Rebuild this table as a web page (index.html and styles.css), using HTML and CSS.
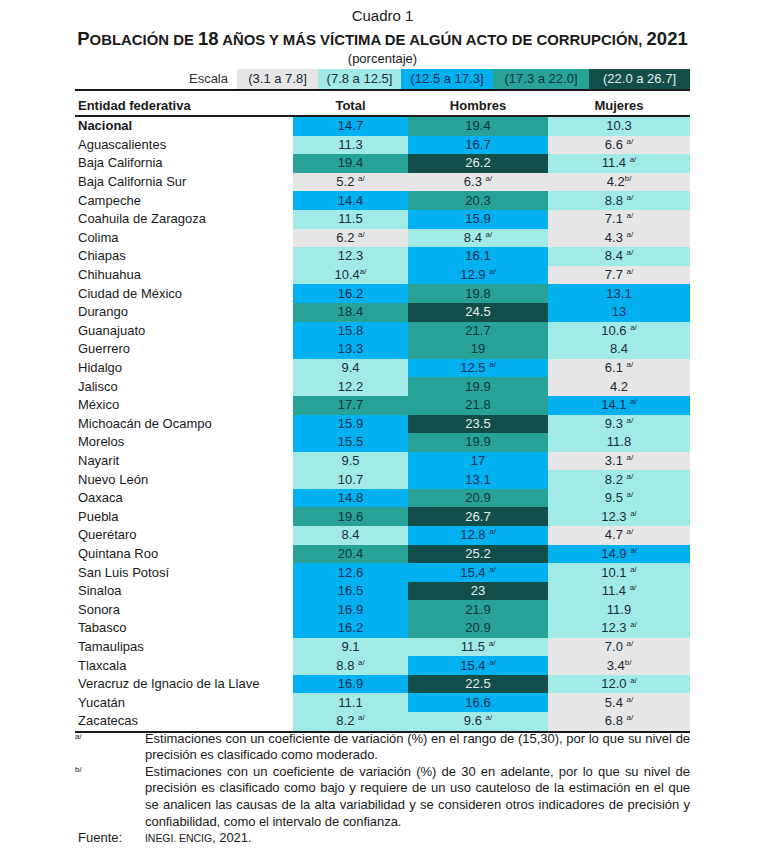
FILE: index.html
```html
<!DOCTYPE html>
<html lang="es">
<head>
<meta charset="utf-8">
<title>Cuadro 1</title>
<link rel="stylesheet" href="styles.css">
</head>
<body>
<div class="page">
  <div class="cuadro">Cuadro 1</div>
  <div class="title"><span class="big">P</span>OBLACIÓN DE <span class="big">18</span> AÑOS Y MÁS VÍCTIMA DE ALGÚN ACTO DE CORRUPCIÓN, <span class="big">2021</span></div>
  <div class="porc">(porcentaje)</div>
  <div class="scale">
    <div class="scale-label">Escala</div>
    <div class="seg s1 c1">(3.1 a 7.8]</div>
    <div class="seg s2 c2">(7.8 a 12.5]</div>
    <div class="seg s3 c3">(12.5 a 17.3]</div>
    <div class="seg s4 c4">(17.3 a 22.0]</div>
    <div class="seg s5 c5">(22.0 a 26.7]</div>
  </div>
  <table class="data">
    <colgroup><col class="w-name"><col class="w-tot"><col class="w-hom"><col class="w-muj"></colgroup>
    <thead>
      <tr><th class="name">Entidad federativa</th><th>Total</th><th>Hombres</th><th>Mujeres</th></tr>
    </thead>
    <tbody>
      <tr><td class="name b">Nacional</td><td class="c3">14.7</td><td class="c4">19.4</td><td class="c2">10.3</td></tr>
      <tr><td class="name">Aguascalientes</td><td class="c2">11.3</td><td class="c3">16.7</td><td class="c1">6.6 <sup>a/</sup></td></tr>
      <tr><td class="name">Baja California</td><td class="c4">19.4</td><td class="c5">26.2</td><td class="c2">11.4 <sup>a/</sup></td></tr>
      <tr><td class="name">Baja California Sur</td><td class="c1">5.2 <sup>a/</sup></td><td class="c1">6.3 <sup>a/</sup></td><td class="c1">4.2<sup>b/</sup></td></tr>
      <tr><td class="name">Campeche</td><td class="c3">14.4</td><td class="c4">20.3</td><td class="c2">8.8 <sup>a/</sup></td></tr>
      <tr><td class="name">Coahuila de Zaragoza</td><td class="c2">11.5</td><td class="c3">15.9</td><td class="c1">7.1 <sup>a/</sup></td></tr>
      <tr><td class="name">Colima</td><td class="c1">6.2 <sup>a/</sup></td><td class="c2">8.4 <sup>a/</sup></td><td class="c1">4.3 <sup>a/</sup></td></tr>
      <tr><td class="name">Chiapas</td><td class="c2">12.3</td><td class="c3">16.1</td><td class="c2">8.4 <sup>a/</sup></td></tr>
      <tr><td class="name">Chihuahua</td><td class="c2">10.4<sup>a/</sup></td><td class="c3">12.9 <sup>a/</sup></td><td class="c1">7.7 <sup>a/</sup></td></tr>
      <tr><td class="name">Ciudad de México</td><td class="c3">16.2</td><td class="c4">19.8</td><td class="c3">13.1</td></tr>
      <tr><td class="name">Durango</td><td class="c4">18.4</td><td class="c5">24.5</td><td class="c3">13</td></tr>
      <tr><td class="name">Guanajuato</td><td class="c3">15.8</td><td class="c4">21.7</td><td class="c2">10.6 <sup>a/</sup></td></tr>
      <tr><td class="name">Guerrero</td><td class="c3">13.3</td><td class="c4">19</td><td class="c2">8.4</td></tr>
      <tr><td class="name">Hidalgo</td><td class="c2">9.4</td><td class="c3">12.5 <sup>a/</sup></td><td class="c1">6.1 <sup>a/</sup></td></tr>
      <tr><td class="name">Jalisco</td><td class="c2">12.2</td><td class="c4">19.9</td><td class="c1">4.2</td></tr>
      <tr><td class="name">México</td><td class="c4">17.7</td><td class="c4">21.8</td><td class="c3">14.1 <sup>a/</sup></td></tr>
      <tr><td class="name">Michoacán de Ocampo</td><td class="c3">15.9</td><td class="c5">23.5</td><td class="c2">9.3 <sup>a/</sup></td></tr>
      <tr><td class="name">Morelos</td><td class="c3">15.5</td><td class="c4">19.9</td><td class="c2">11.8</td></tr>
      <tr><td class="name">Nayarit</td><td class="c2">9.5</td><td class="c3">17</td><td class="c1">3.1 <sup>a/</sup></td></tr>
      <tr><td class="name">Nuevo León</td><td class="c2">10.7</td><td class="c3">13.1</td><td class="c2">8.2 <sup>a/</sup></td></tr>
      <tr><td class="name">Oaxaca</td><td class="c3">14.8</td><td class="c4">20.9</td><td class="c2">9.5 <sup>a/</sup></td></tr>
      <tr><td class="name">Puebla</td><td class="c4">19.6</td><td class="c5">26.7</td><td class="c2">12.3 <sup>a/</sup></td></tr>
      <tr><td class="name">Querétaro</td><td class="c2">8.4</td><td class="c3">12.8 <sup>a/</sup></td><td class="c1">4.7 <sup>a/</sup></td></tr>
      <tr><td class="name">Quintana Roo</td><td class="c4">20.4</td><td class="c5">25.2</td><td class="c3">14.9 <sup>a/</sup></td></tr>
      <tr><td class="name">San Luis Potosí</td><td class="c3">12.6</td><td class="c3">15.4 <sup>a/</sup></td><td class="c2">10.1 <sup>a/</sup></td></tr>
      <tr><td class="name">Sinaloa</td><td class="c3">16.5</td><td class="c5">23</td><td class="c2">11.4 <sup>a/</sup></td></tr>
      <tr><td class="name">Sonora</td><td class="c3">16.9</td><td class="c4">21.9</td><td class="c2">11.9</td></tr>
      <tr><td class="name">Tabasco</td><td class="c3">16.2</td><td class="c4">20.9</td><td class="c2">12.3 <sup>a/</sup></td></tr>
      <tr><td class="name">Tamaulipas</td><td class="c2">9.1</td><td class="c2">11.5 <sup>a/</sup></td><td class="c1">7.0 <sup>a/</sup></td></tr>
      <tr><td class="name">Tlaxcala</td><td class="c2">8.8 <sup>a/</sup></td><td class="c3">15.4 <sup>a/</sup></td><td class="c1">3.4<sup>b/</sup></td></tr>
      <tr><td class="name">Veracruz de Ignacio de la Llave</td><td class="c3">16.9</td><td class="c5">22.5</td><td class="c2">12.0 <sup>a/</sup></td></tr>
      <tr><td class="name">Yucatán</td><td class="c2">11.1</td><td class="c3">16.6</td><td class="c1">5.4 <sup>a/</sup></td></tr>
      <tr><td class="name">Zacatecas</td><td class="c2">8.2 <sup>a/</sup></td><td class="c2">9.6 <sup>a/</sup></td><td class="c1">6.8 <sup>a/</sup></td></tr>
    </tbody>
  </table>
  <div class="notes">
    <div class="note"><span class="mark">a/</span><p>Estimaciones con un coeficiente de variación (%) en el rango de (15,30), por lo que su nivel de precisión es clasificado como moderado.</p></div>
    <div class="note"><span class="mark">b/</span><p>Estimaciones con un coeficiente de variación (%) de 30 en adelante, por lo que su nivel de precisión es clasificado como bajo y requiere de un uso cauteloso de la estimación en el que se analicen las causas de la alta variabilidad y se consideren otros indicadores de precisión y confiabilidad, como el intervalo de confianza.</p></div>
    <div class="note src"><span class="mark-src">Fuente:</span><p><span class="sc">INEGI. ENCIG</span>, 2021.</p></div>
  </div>
</div>
</body>
</html>
```
FILE: styles.css
```css
html, body {
  margin: 0;
  padding: 0;
  background: #ffffff;
}
body {
  font-family: "Liberation Sans", Arial, sans-serif;
  color: #1a1a1a;
}
.page {
  width: 615px;
  margin-left: 75px;
  padding-top: 7px;
}
.cuadro {
  text-align: center;
  font-size: 15px;
  line-height: 18px;
}
.title {
  margin-top: 4px;
  text-align: center;
  font-size: 14.9px;
  line-height: 20px;
  font-weight: bold;
  white-space: nowrap;
  margin-left: -20px;
  margin-right: -20px;
}
.title .big {
  font-size: 18.5px;
}
.porc {
  margin-top: 1px;
  text-align: center;
  font-size: 13px;
  line-height: 16px;
}
.scale {
  display: flex;
  margin-top: 2px;
  height: 20px;
  border-bottom: 2px solid #1a1a1a;
  font-size: 13px;
  line-height: 20px;
}
.scale-label {
  padding-right: 9px;
  box-sizing: border-box;
  width: 162px;
  text-align: right;
  color: #333;
}
.seg {
  text-align: center;
}
.s1 { width: 81px; }
.s2 { width: 83px; }
.s3 { width: 92px; }
.s4 { width: 96px; }
.s5 { width: 101px; }

.c1 { background: #e6e6e6; color: #22272e; }
.c2 { background: #a1eae5; color: #1a2d40; }
.c3 { background: #03b0f0; color: #102f50; }
.c4 { background: #28a297; color: #0f3640; }
.c5 { background: #134f4a; color: #e4ecec; }

.data {
  width: 615px;
  border-collapse: collapse;
  table-layout: fixed;
  font-size: 13px;
  border-bottom: 2px solid #1a1a1a;
}
.w-name { width: 218px; }
.w-tot { width: 115px; }
.w-hom { width: 140px; }
.w-muj { width: 142px; }

.data th {
  font-weight: bold;
  text-align: center;
  height: 25px;
  padding: 0 0 1px;
  vertical-align: bottom;
  line-height: 16px;
  border-bottom: 2px solid #1a1a1a;
  box-sizing: border-box;
}
.data th.name {
  text-align: left;
  padding-left: 3px;
}
.data td {
  height: 18.6px;
  padding: 0;
  text-align: center;
  line-height: 16px;
  white-space: nowrap;
}
.data td.name {
  text-align: left;
  padding-left: 3px;
  color: #1a1a1a;
}
.data td.b {
  font-weight: bold;
}
sup {
  font-size: 8px;
  line-height: 0;
  vertical-align: 5px;
}
.notes {
  font-size: 13px;
  line-height: 16.6px;
  margin-top: -2px;
}
.note {
  display: flex;
}
.note p {
  margin: 0;
  width: 550px;
  text-align: justify;
  letter-spacing: -0.05px;
}
.mark {
  width: 70px;
  font-size: 8px;
  line-height: 10px;
  margin-top: 1px;
  flex: none;
}
.mark-src {
  width: 70px;
  flex: none;
  padding-left: 3px;
  box-sizing: border-box;
}
.sc {
  font-size: 10.5px;
}
```
